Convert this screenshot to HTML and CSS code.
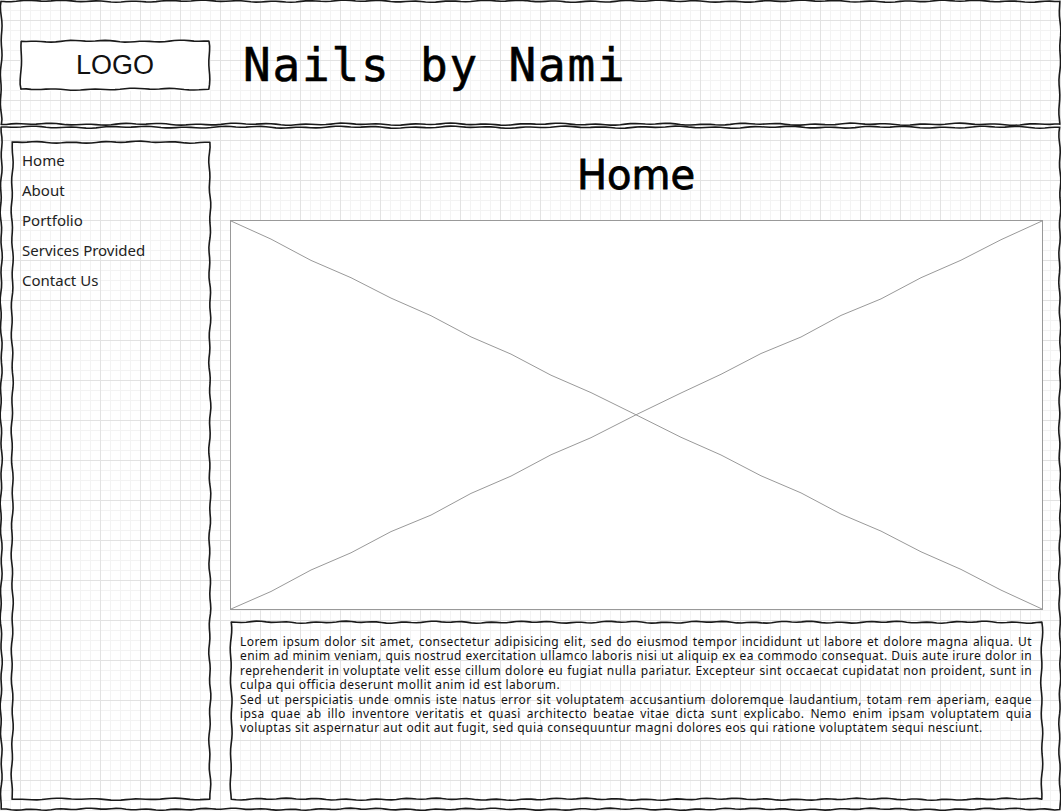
FILE: index.html
```html
<!DOCTYPE html>
<html lang="en">
<head>
<meta charset="utf-8">
<title>Nails by Nami</title>
<link rel="stylesheet" href="styles.css">
</head>
<body>
<div class="page">
  <header class="header sketch">
    <div class="logo sketch">LOGO</div>
    <h1 class="site-title">Nails by Nami</h1>
  </header>
  <main class="main sketch">
    <nav class="sidebar sketch">
      <a class="nav-item" href="#">Home</a>
      <a class="nav-item" href="#">About</a>
      <a class="nav-item" href="#">Portfolio</a>
      <a class="nav-item" href="#">Services Provided</a>
      <a class="nav-item" href="#">Contact Us</a>
    </nav>
    <section class="content">
      <h2 class="page-title">Home</h2>
      <div class="image-placeholder">
        <svg class="x-lines" viewBox="0 0 811 390" preserveAspectRatio="none">
          <polyline class="x-line" points="0,0 40,18.2 80,39.6 120,57 160,77.5 200,95.2 240,116.5 280,133.8 320,155 360,172.5 405,194.8 450,217.4 490,235.2 530,256.1 570,273.3 610,294.6 650,311.7 690,332.5 730,350.2 770,371 811,390"/>
          <polyline class="x-line" points="0,390 40,372.4 80,350.8 120,333.5 160,312.2 200,295.6 240,273.8 280,256.4 320,235 360,217.8 405,194.8 450,172.9 490,154.1 530,133.2 570,116.6 610,94.9 650,78.3 690,57 730,39.4 770,18.8 811,0"/>
        </svg>
      </div>
      <div class="text-box sketch">
        <p class="para">Lorem ipsum dolor sit amet, consectetur adipisicing elit, sed do eiusmod tempor incididunt ut labore et dolore magna aliqua. Ut enim ad minim veniam, quis nostrud exercitation ullamco laboris nisi ut aliquip ex ea commodo consequat. Duis aute irure dolor in reprehenderit in voluptate velit esse cillum dolore eu fugiat nulla pariatur. Excepteur sint occaecat cupidatat non proident, sunt in culpa qui officia deserunt mollit anim id est laborum.</p>
        <p class="para">Sed ut perspiciatis unde omnis iste natus error sit voluptatem accusantium doloremque laudantium, totam rem aperiam, eaque ipsa quae ab illo inventore veritatis et quasi architecto beatae vitae dicta sunt explicabo. Nemo enim ipsam voluptatem quia voluptas sit aspernatur aut odit aut fugit, sed quia consequuntur magni dolores eos qui ratione voluptatem sequi nesciunt.</p>
      </div>
    </section>
  </main>
</div>
<script src="script.js"></script>
</body>
</html>
```

FILE: styles.css
```css
html, body {
  margin: 0;
  padding: 0;
}

body {
  width: 1061px;
  height: 811px;
  overflow: hidden;
  background-color: #ffffff;
  background-image:
    linear-gradient(to right, #e2e2e2 1px, transparent 1px),
    linear-gradient(to bottom, #e2e2e2 1px, transparent 1px),
    linear-gradient(to right, #f3f3f3 1px, transparent 1px),
    linear-gradient(to bottom, #f3f3f3 1px, transparent 1px);
  background-size: 40px 40px, 40px 40px, 10px 10px, 10px 10px;
  background-position: 20px 0, 0 20px, 0 0, 0 0;
  font-family: "Noto Sans", "DejaVu Sans", sans-serif;
  color: #222;
}

.page {
  display: flex;
  flex-direction: column;
  height: 811px;
}

.sketch {
  position: relative;
}

.sketch-border {
  position: absolute;
  left: 0;
  top: 0;
  overflow: visible;
  pointer-events: none;
}

.sketch-border path {
  fill: none;
  stroke: #1a1a1a;
  stroke-width: 1.6;
  stroke-linejoin: round;
  stroke-linecap: round;
}

.header {
  height: 126px;
  box-sizing: border-box;
  display: flex;
  align-items: center;
  padding: 0 0 0 20px;
  gap: 33px;
}

.logo {
  width: 190px;
  height: 51px;
  box-sizing: border-box;
  display: flex;
  align-items: center;
  justify-content: center;
  background: #fff;
  font-family: "Liberation Sans", Arial, sans-serif;
  font-size: 27px;
  color: #111;
  margin-top: 4px;
}

.site-title {
  margin: 0;
  font-family: "DejaVu Sans Mono", monospace;
  font-weight: normal;
  font-size: 46px;
  letter-spacing: 1.8px;
  color: #000;
  line-height: 1;
  margin-top: 3px;
  -webkit-text-stroke: 0.6px #000;
}

.main {
  flex: 1;
  display: flex;
  gap: 19px;
  padding: 15px 19px 10px 11px;
}

.sidebar {
  width: 200px;
  flex: none;
  display: flex;
  flex-direction: column;
  padding: 4px 0 0 11px;
  box-sizing: border-box;
}

.nav-item {
  display: block;
  height: 30px;
  line-height: 30px;
  font-size: 15px;
  color: #222;
  text-decoration: none;
}

.content {
  flex: 1;
  display: flex;
  flex-direction: column;
  min-width: 0;
}

.page-title {
  margin: 0 0 11px;
  text-align: center;
  font-family: "DejaVu Sans", sans-serif;
  font-weight: normal;
  font-size: 40px;
  line-height: 68px;
  height: 68px;
  color: #000;
  -webkit-text-stroke: 0.8px #000;
}

.image-placeholder {
  height: 390px;
  box-sizing: border-box;
  border: 1px solid #999;
  background: #fff;
  margin-right: -1px;
}

.x-lines {
  display: block;
  width: 100%;
  height: 100%;
}

.x-line {
  fill: none;
  stroke: #999;
  stroke-width: 1;
  vector-effect: non-scaling-stroke;
}

.text-box {
  margin-top: 11px;
  flex: 1;
  box-sizing: border-box;
  padding: 14px 11px 0 10px;
  margin-right: -1px;
}

.para {
  margin: 0;
  font-size: 12px;
  letter-spacing: 0.42px;
  line-height: 14.4px;
  text-align: justify;
  color: #111;
}
```

FILE: script.js
```js
(function () {
  var seed = 11;
  function rand() {
    seed = (seed * 16807) % 2147483647;
    return (seed - 1) / 2147483646;
  }
  function edge(x0, y0, x1, y1) {
    var dx = x1 - x0, dy = y1 - y0;
    var len = Math.sqrt(dx * dx + dy * dy);
    var nx = -dy / len, ny = dx / len;
    var steps = Math.max(2, Math.round(len / 5));
    var p1 = rand() * 6.28, p2 = rand() * 6.28;
    var f1 = 0.16 + rand() * 0.06, f2 = 0.04 + rand() * 0.03;
    var pts = [];
    for (var i = 0; i <= steps; i++) {
      var t = i / steps;
      var d = t * len;
      var o = 0.55 * Math.sin(d * f1 + p1) + 0.55 * Math.sin(d * f2 + p2);
      if (i === 0 || i === steps) o *= 0.3;
      pts.push([(x0 + dx * t + nx * o).toFixed(2), (y0 + dy * t + ny * o).toFixed(2)]);
    }
    return pts;
  }
  var els = document.querySelectorAll('.sketch');
  for (var k = 0; k < els.length; k++) {
    var el = els[k];
    var w = el.offsetWidth, h = el.offsetHeight;
    var a = 1.2, b = w - 1.2, c = 1.2, d = h - 1.8;
    var all = [].concat(edge(a, c, b, c), edge(b, c, b, d), edge(b, d, a, d), edge(a, d, a, c));
    var dstr = 'M' + all[0][0] + ' ' + all[0][1];
    for (var i = 1; i < all.length; i++) dstr += ' L' + all[i][0] + ' ' + all[i][1];
    var svg = document.createElementNS('http://www.w3.org/2000/svg', 'svg');
    svg.setAttribute('class', 'sketch-border');
    svg.setAttribute('width', w);
    svg.setAttribute('height', h);
    svg.setAttribute('viewBox', '0 0 ' + w + ' ' + h);
    var p = document.createElementNS('http://www.w3.org/2000/svg', 'path');
    p.setAttribute('d', dstr + ' Z');
    svg.appendChild(p);
    el.appendChild(svg);
  }
})();
```
